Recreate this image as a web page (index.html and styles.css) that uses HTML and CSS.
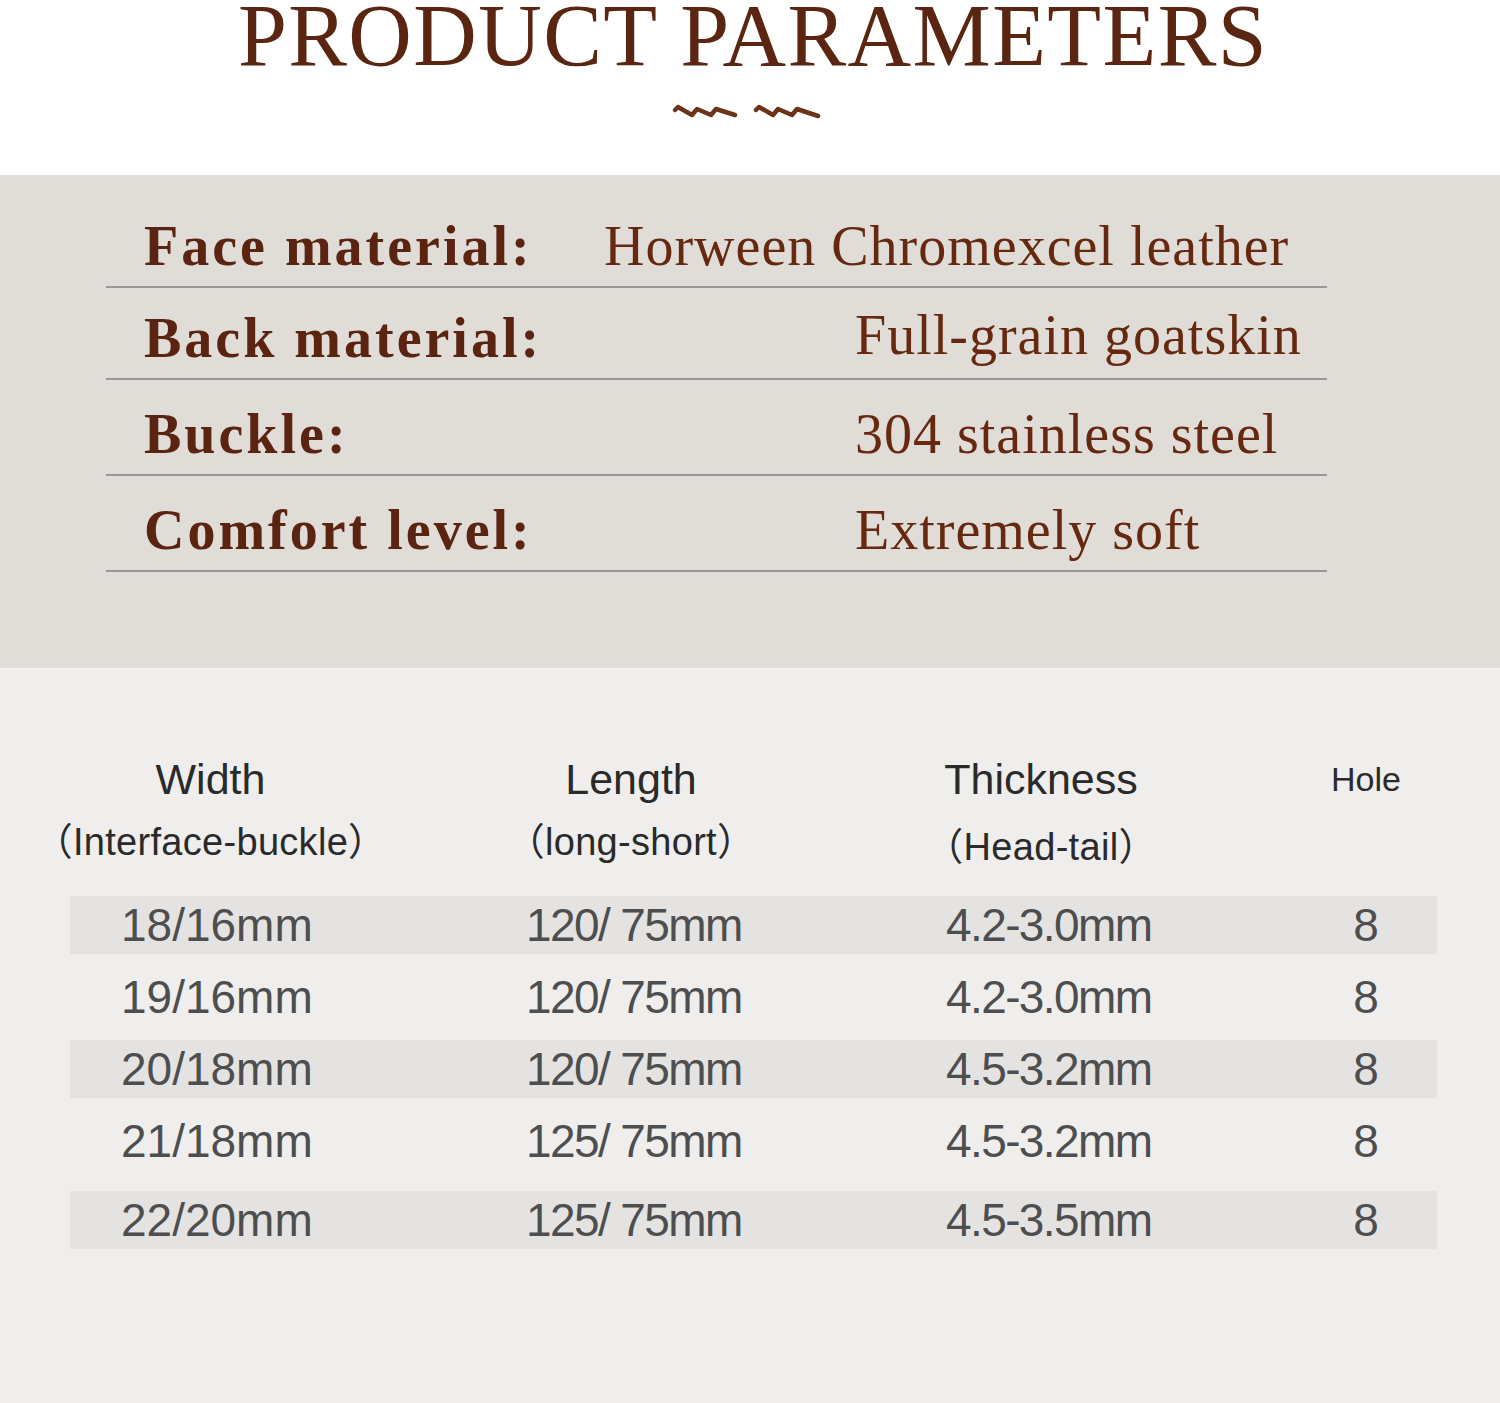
FILE: index.html
```html
<!DOCTYPE html>
<html lang="en">
<head>
<meta charset="utf-8">
<title>Product Parameters</title>
<link rel="stylesheet" href="styles.css">
</head>
<body>
<div class="page">
  <header class="hero">
    <h1 class="hero-title">PRODUCT PARAMETERS</h1>
    <svg class="hero-wave" width="150" height="26" viewBox="0 0 150 26" aria-hidden="true">
      <path d="M4,12 L7,9 L21,17 L26,11 L40,17 L45,11 L64,17" fill="none" stroke="#6b3318" stroke-width="4.5" stroke-linecap="round" stroke-linejoin="round"/>
      <path d="M85,12 L88,9 L102,17 L107,11 L121,17 L126,11 L147,18" fill="none" stroke="#6b3318" stroke-width="4.5" stroke-linecap="round" stroke-linejoin="round"/>
    </svg>
  </header>

  <section class="specs">
    <div class="spec-list">
      <div class="spec-row spec-row--wide">
        <span class="spec-label">Face material:</span>
        <span class="spec-value">Horween Chromexcel leather</span>
      </div>
      <div class="spec-row spec-row--short">
        <span class="spec-label">Back material:</span>
        <span class="spec-value spec-value--raised">Full-grain goatskin</span>
      </div>
      <div class="spec-row">
        <span class="spec-label">Buckle:</span>
        <span class="spec-value">304 stainless steel</span>
      </div>
      <div class="spec-row">
        <span class="spec-label">Comfort level:</span>
        <span class="spec-value">Extremely soft</span>
      </div>
    </div>
  </section>

  <section class="sizes">
    <div class="size-table">
      <div class="size-head">
        <div class="head-cell head-cell--first">
          <div class="head-main">Width</div>
          <div class="head-sub">（Interface-buckle）</div>
        </div>
        <div class="head-cell">
          <div class="head-main">Length</div>
          <div class="head-sub">（long-short）</div>
        </div>
        <div class="head-cell">
          <div class="head-main">Thickness</div>
          <div class="head-sub head-sub--low">（Head-tail）</div>
        </div>
        <div class="head-cell head-cell--hole">
          <div class="head-main head-main--small">Hole</div>
        </div>
      </div>

      <div class="size-rows">
        <div class="size-row size-row--shaded">
          <span class="cell">18/16mm</span>
          <span class="cell cell--tight">120/ 75mm</span>
          <span class="cell cell--tight">4.2-3.0mm</span>
          <span class="cell cell--center">8</span>
        </div>
        <div class="size-row">
          <span class="cell">19/16mm</span>
          <span class="cell cell--tight">120/ 75mm</span>
          <span class="cell cell--tight">4.2-3.0mm</span>
          <span class="cell cell--center">8</span>
        </div>
        <div class="size-row size-row--shaded">
          <span class="cell">20/18mm</span>
          <span class="cell cell--tight">120/ 75mm</span>
          <span class="cell cell--tight">4.5-3.2mm</span>
          <span class="cell cell--center">8</span>
        </div>
        <div class="size-row">
          <span class="cell">21/18mm</span>
          <span class="cell cell--tight">125/ 75mm</span>
          <span class="cell cell--tight">4.5-3.2mm</span>
          <span class="cell cell--center">8</span>
        </div>
        <div class="size-row size-row--shaded size-row--last">
          <span class="cell">22/20mm</span>
          <span class="cell cell--tight">125/ 75mm</span>
          <span class="cell cell--tight">4.5-3.5mm</span>
          <span class="cell cell--center">8</span>
        </div>
      </div>
    </div>
  </section>
</div>
</body>
</html>
```

FILE: styles.css
```css
html, body {
  margin: 0;
  padding: 0;
  background: #ffffff;
}

.page {
  width: 1500px;
  height: 1403px;
  overflow: hidden;
  display: flex;
  flex-direction: column;
}

/* ---------- Title ---------- */
.hero {
  height: 175px;
  background: #ffffff;
  display: flex;
  flex-direction: column;
  align-items: center;
}

.hero-title {
  margin: 0;
  font-family: "Liberation Serif", "Times New Roman", serif;
  font-weight: normal;
  font-size: 88px;
  line-height: 72px;
  height: 72px;
  letter-spacing: 1.4px;
  color: #5b2611;
  padding-left: 6px;
}

.hero-wave {
  display: block;
  margin-top: 26px;
  margin-right: 8px;
}

/* ---------- Specs ---------- */
.specs {
  height: 493px;
  background: #e0dcd8;
  padding-top: 19px;
  box-sizing: border-box;
}

.spec-list {
  margin-left: 106px;
  width: 1221px;
}

.spec-row {
  height: 96px;
  box-sizing: border-box;
  border-bottom: 2px solid #9a9794;
  padding: 0 0 12px 38px;
  display: flex;
  align-items: baseline;
  align-content: flex-end;
  flex-wrap: wrap;
  font-family: "Liberation Serif", "Times New Roman", serif;
  font-size: 56px;
  line-height: 56px;
  color: #5a2410;
}

.spec-row--wide {
  height: 94px;
}

.spec-row--short {
  height: 92px;
}

.spec-label {
  width: 711px;
  font-weight: bold;
  letter-spacing: 3px;
}

.spec-row--wide .spec-label {
  width: 460px;
}

.spec-value {
  letter-spacing: 1px;
  color: #66290f;
}

.spec-value--raised {
  position: relative;
  top: -3px;
}

/* ---------- Size table ---------- */
.sizes {
  flex: 1;
  background: #efeeed;
  border-top: 1px solid #f6f5f3;
  padding-top: 86px;
  box-sizing: border-box;
}

.size-table {
  margin-left: 70px;
  width: 1367px;
  font-family: "Liberation Sans", Arial, "Noto Sans CJK SC", sans-serif;
}

.size-head,
.size-row {
  display: grid;
  grid-template-columns: 405px 420px 400px 142px;
}

.size-head {
  margin-bottom: 26px;
}

.head-cell {
  padding-right: 108px;
  text-align: center;
  display: flex;
  flex-direction: column;
  align-items: center;
  gap: 16px;
}

.head-cell--first {
  padding-right: 124px;
}

.head-cell--hole {
  padding-right: 0;
}

.head-main {
  font-size: 43px;
  line-height: 48px;
  height: 48px;
  color: #2a2a2a;
}

.head-main--small {
  font-size: 34px;
}

.head-sub {
  font-size: 38px;
  line-height: 46px;
  color: #2a2a2a;
  white-space: nowrap;
  letter-spacing: 0.3px;
}

.head-sub--low {
  margin-top: 5px;
}

.size-rows {
  display: flex;
  flex-direction: column;
  gap: 14px;
}

.size-row {
  height: 58px;
  align-items: center;
}

.size-row--shaded {
  background: #e4e3e2;
}

.size-row--last {
  margin-top: 7px;
}

.cell {
  padding-left: 51px;
  font-size: 46px;
  line-height: 58px;
  color: #4e4e4e;
  white-space: nowrap;
}

.cell--tight {
  letter-spacing: -1.6px;
}

.cell--center {
  padding-left: 0;
  text-align: center;
}
```
